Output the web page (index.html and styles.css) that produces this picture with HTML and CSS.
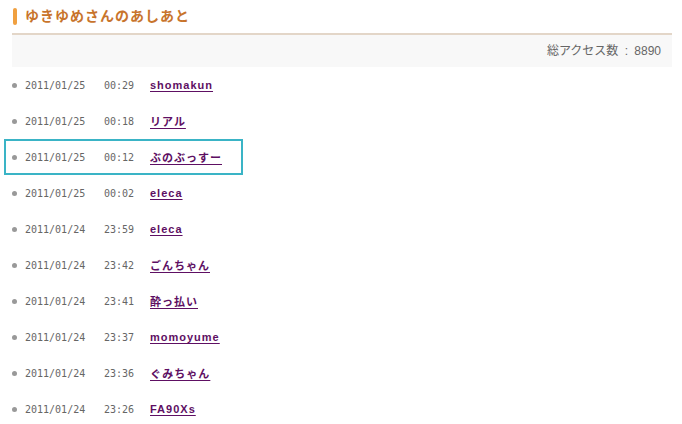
FILE: index.html
```html
<!DOCTYPE html>
<html lang="ja">
<head>
    <meta charset="UTF-8">
    <title>ゆきゆめさんのあしあと</title>
    <link rel="stylesheet" href="styles.css">
</head>
<body>
    <div class="footprints">
        <h2 class="footprints-title">ゆきゆめさんのあしあと</h2>
        <div class="access-count">総アクセス数 : 8890</div>
        <ul class="visit-list">
            <li class="visit"><span class="visit-date">2011/01/25</span><span class="visit-time">00:29</span><a class="visit-name" href="#">shomakun</a></li>
            <li class="visit"><span class="visit-date">2011/01/25</span><span class="visit-time">00:18</span><a class="visit-name" href="#">リアル</a></li>
            <li class="visit current"><span class="visit-date">2011/01/25</span><span class="visit-time">00:12</span><a class="visit-name" href="#">ぶのぶっすー</a></li>
            <li class="visit"><span class="visit-date">2011/01/25</span><span class="visit-time">00:02</span><a class="visit-name" href="#">eleca</a></li>
            <li class="visit"><span class="visit-date">2011/01/24</span><span class="visit-time">23:59</span><a class="visit-name" href="#">eleca</a></li>
            <li class="visit"><span class="visit-date">2011/01/24</span><span class="visit-time">23:42</span><a class="visit-name" href="#">ごんちゃん</a></li>
            <li class="visit"><span class="visit-date">2011/01/24</span><span class="visit-time">23:41</span><a class="visit-name" href="#">酔っ払い</a></li>
            <li class="visit"><span class="visit-date">2011/01/24</span><span class="visit-time">23:37</span><a class="visit-name" href="#">momoyume</a></li>
            <li class="visit"><span class="visit-date">2011/01/24</span><span class="visit-time">23:36</span><a class="visit-name" href="#">ぐみちゃん</a></li>
            <li class="visit"><span class="visit-date">2011/01/24</span><span class="visit-time">23:26</span><a class="visit-name" href="#">FA90Xs</a></li>
        </ul>
    </div>
</body>
</html>
```

FILE: styles.css
```css
* {
    margin: 0;
    padding: 0;
    box-sizing: border-box;
}

body {
    font-family: "Liberation Sans", "Noto Sans CJK JP", sans-serif;
    background-color: #fff;
    color: #555;
}

.footprints {
    width: 660px;
    margin-left: 12px;
}

.footprints-title {
    display: flex;
    align-items: center;
    height: 35px;
    padding-left: 13px;
    padding-bottom: 3px;
    position: relative;
    font-size: 14px;
    font-weight: bold;
    letter-spacing: 1px;
    color: #c8742c;
    border-bottom: 2px solid #e3d6c8;
}

.footprints-title::before {
    content: "";
    position: absolute;
    left: 1px;
    top: 8px;
    width: 4px;
    height: 17px;
    border-radius: 2px;
    background: #f0a040;
}

.access-count {
    height: 32px;
    line-height: 32px;
    padding-right: 11px;
    text-align: right;
    font-size: 12px;
    word-spacing: 3px;
    color: #666;
    background: #f8f8f8;
}

.visit-list {
    list-style: none;
    margin-left: -8px;
}

.visit {
    display: flex;
    align-items: center;
    width: 239px;
    height: 36px;
    padding-left: 19px;
    position: relative;
    font-family: "DejaVu Sans Mono", "Noto Sans CJK JP", monospace;
    font-size: 10px;
    color: #666;
    border: 2px solid transparent;
}

.visit::before {
    content: "";
    position: absolute;
    left: 6px;
    top: calc(50% - 2px);
    width: 5px;
    height: 5px;
    border-radius: 50%;
    background: #999;
}

.visit.current {
    border-color: #3ab4c6;
}

.visit-date {
    width: 79px;
}

.visit-time {
    width: 46px;
}

.visit-name {
    font-family: "Liberation Sans", "Noto Sans CJK JP", sans-serif;
    font-size: 11px;
    font-weight: bold;
    letter-spacing: 1px;
    color: #5e0f63;
    text-underline-offset: 2px;
}
```
